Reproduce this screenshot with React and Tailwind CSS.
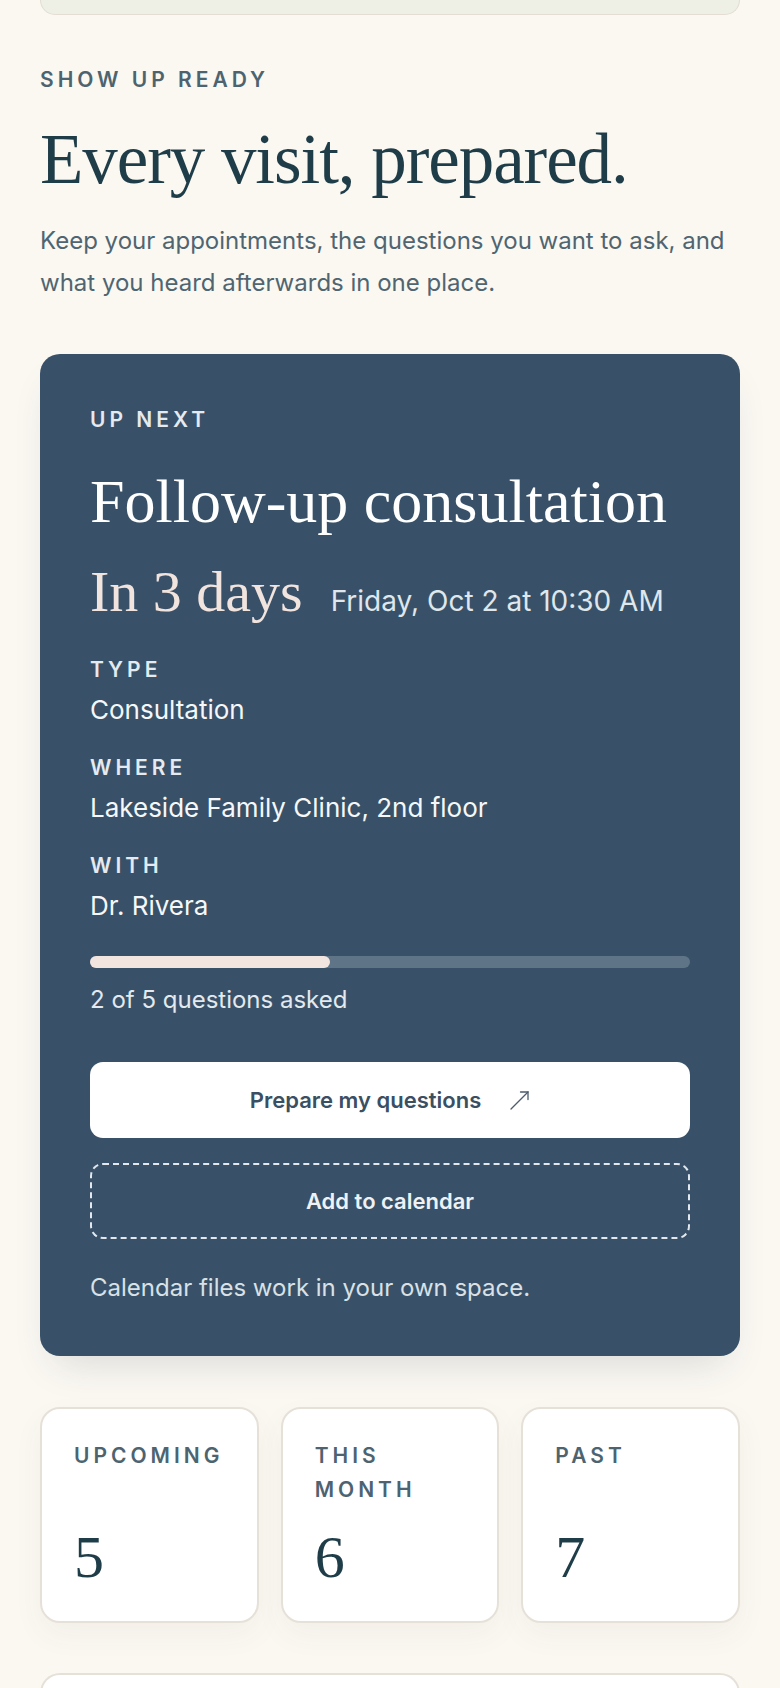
import React from 'react'

const serif = "font-['Liberation_Serif','Times_New_Roman',serif]"

const Detail = ({ label, value, first }) => (
  <div className={first ? 'mt-[33px]' : 'mt-[28px]'}>
    <p className="text-[21px] leading-[28px] font-semibold tracking-[0.19em] text-[#e4eaef]">{label}</p>
    <p className="mt-[10px] text-[26px] leading-[32px] text-[#f5f7f9]">{value}</p>
  </div>
)

const Stat = ({ label, value }) => (
  <div className="flex h-[216px] flex-col justify-between rounded-[20px] border-2 border-[#e6e1d8] bg-white pl-[32px] pr-[14px] pt-[30px] pb-[34px] shadow-[0_12px_30px_rgba(70,60,40,0.05)]">
    <p className="w-min text-[21px] leading-[34px] font-semibold tracking-[0.19em] text-[#4d6470]">{label}</p>
    <p className={`${serif} text-[60px] leading-none text-[#1f3d48]`}>{value}</p>
  </div>
)

const ArrowUpRight = () => (
  <svg width="21" height="21" viewBox="0 0 21 21" fill="none" stroke="#4b5c6c" strokeWidth="1.3" strokeLinecap="round">
    <path d="M2 19 L19 2" />
    <path d="M11.5 2 H19 V9.5" />
  </svg>
)

export default function App() {
  return (
    <div className="min-h-screen bg-[#fbf8f2] px-[40px] font-['Inter','Liberation_Sans',sans-serif]">
      <div className="h-[15px] rounded-b-[18px] border-x border-b border-[#e3ddd3] bg-[#eef0e6]" />

      <p className="mt-[51px] text-[21px] leading-[28px] font-semibold tracking-[0.19em] text-[#4d6470]">SHOW UP READY</p>
      <h1 className={`${serif} mt-[27px] text-[71px] leading-[77px] tracking-[-0.015em] text-[#1f3d48]`}>
        Every visit, prepared.
      </h1>
      <p className="mt-[22px] text-[24px] leading-[42px] text-[#4f6571]">
        Keep your appointments, the questions you want to ask, and what you heard afterwards in one place.
      </p>

      <section className="mt-[50px] rounded-[20px] bg-[#385168] px-[50px] pt-[52px] pb-[53px] shadow-[0_20px_40px_-16px_rgba(40,60,80,0.18)]">
        <p className="text-[21px] leading-[28px] font-semibold tracking-[0.19em] text-[#e4eaef]">UP NEXT</p>
        <h2 className={`${serif} mt-[33px] text-[62px] leading-[68px] text-white`}>Follow-up consultation</h2>
        <div className="mt-[26px] flex items-baseline gap-[28px]">
          <span className={`${serif} text-[58px] leading-[62px] text-[#f1e3de]`}>In 3 days</span>
          <span className="text-[28px] leading-[34px] text-[#dfe6ec]">Friday, Oct 2 at 10:30 AM</span>
        </div>

        <Detail first label="TYPE" value="Consultation" />
        <Detail label="WHERE" value="Lakeside Family Clinic, 2nd floor" />
        <Detail label="WITH" value="Dr. Rivera" />

        <div className="mt-[34px] h-[12px] rounded-full bg-[#5f7587]">
          <div className="h-full w-[40%] rounded-full bg-[#f2e4df]" />
        </div>
        <p className="mt-[17px] text-[24px] leading-[30px] text-[#e3e9ee]">2 of 5 questions asked</p>

        <button className="mt-[47px] flex h-[76px] w-full items-center justify-center gap-[28px] rounded-[13px] bg-white text-[22px] font-semibold text-[#3b4f62]">
          <span>Prepare my questions</span>
          <ArrowUpRight />
        </button>
        <button className="mt-[25px] flex h-[76px] w-full items-center justify-center rounded-[13px] border-2 border-dashed border-[#e2e8ed] text-[22px] font-semibold text-[#eef2f5]">
          Add to calendar
        </button>
        <p className="mt-[34px] text-[24px] leading-[30px] text-[#d9e1e7]">Calendar files work in your own space.</p>
      </section>

      <div className="mt-[51px] grid grid-cols-3 gap-[22px]">
        <Stat label="UPCOMING" value="5" />
        <Stat label="THIS MONTH" value="6" />
        <Stat label="PAST" value="7" />
      </div>

      <div className="mt-[50px] h-[60px] rounded-t-[20px] border-2 border-b-0 border-[#e6e1d8] bg-white" />
    </div>
  )
}
